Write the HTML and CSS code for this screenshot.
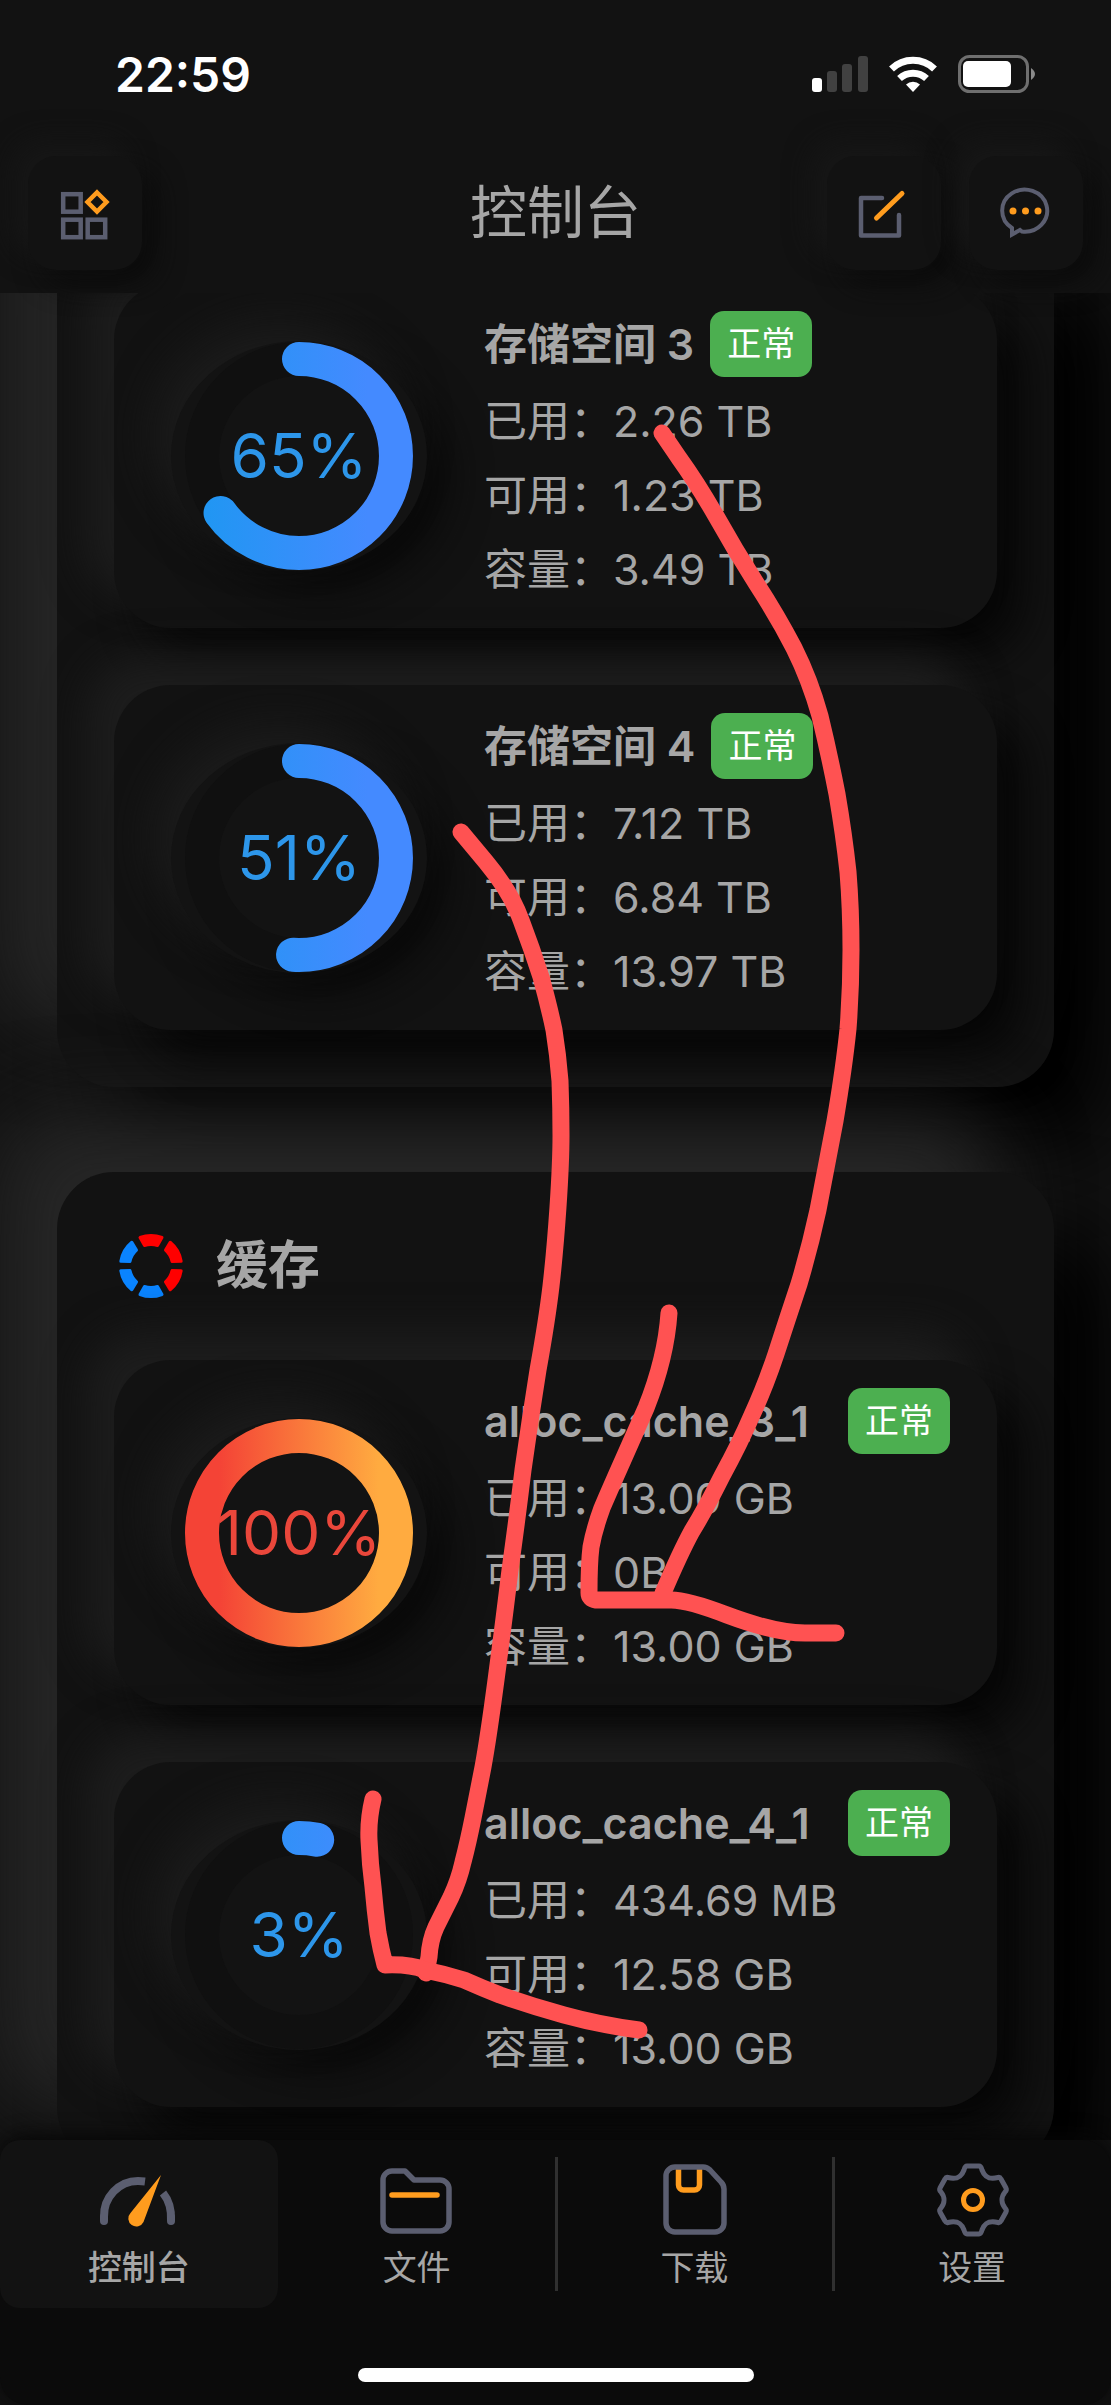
FILE: index.html
```html
<!DOCTYPE html>
<html lang="zh-CN">
<head>
<meta charset="utf-8">
<meta name="viewport" content="width=device-width, initial-scale=1">
<title>控制台</title>
<link rel="stylesheet" href="styles.css">
</head>
<body>
<header class="top">
  <div class="status">
    <span class="clock">22:59</span>
    <div class="status-icons">
      <svg width="56" height="38" viewBox="0 0 56 38" aria-hidden="true">
        <rect x="0" y="23" width="10" height="14" rx="3" fill="#fff"/>
        <g fill="#414141"><rect x="15" y="16" width="10" height="21" rx="3"/><rect x="30" y="9" width="10" height="28" rx="3"/><rect x="46" y="1" width="10" height="36" rx="3"/></g>
      </svg>
      <svg width="48" height="38" viewBox="0 0 48 38" aria-hidden="true">
        <g fill="none" stroke="#fff" stroke-width="7"><path d="M2.500 14 A31 31 0 0 1 45.500 14"/><path d="M10.500 23.500 A20 20 0 0 1 37.500 23.500"/></g>
        <path d="M24 37 L17 29.500 A10.500 10.500 0 0 1 31 29.500 Z" fill="#fff"/>
      </svg>
      <svg width="79" height="38" viewBox="0 0 79 38" aria-hidden="true">
        <rect x="1.500" y="1.500" width="68" height="35" rx="10" fill="none" stroke="#6f6f6f" stroke-width="3"/>
        <rect x="5" y="6" width="48" height="26" rx="5" fill="#fff"/>
        <path d="M73 13 Q81 19 73 25 Z" fill="#8a8a8a"/>
      </svg>
    </div>
  </div>
  <div class="toolbar">
    <div class="tools">
      <button class="tool" type="button" aria-label="应用">
        <svg viewBox="0 0 114 114" fill="none" stroke-width="4.500" stroke="#5b5e70"><rect x="35.200" y="38.200" width="17.500" height="17.500"/><rect x="35.200" y="63.700" width="17.500" height="17.500"/><rect x="59.700" y="63.700" width="17.500" height="17.500"/><path d="M69 36.500 L78.500 46 L69 55.500 L59.500 46 Z" stroke="#ff9c1e"/></svg>
      </button>
    </div>
    <h1 class="title">控制台</h1>
    <div class="tools tools-end">
      <button class="tool" type="button" aria-label="编辑">
        <svg viewBox="0 0 114 114" fill="none" stroke-width="4.500" stroke="#5b5e70" stroke-linecap="round" stroke-linejoin="round"><path d="M55 42 H34 V79.500 H72 V59"/><path d="M75 37.500 L49.500 62" stroke="#ff9c1e" stroke-width="5"/></svg>
      </button>
      <button class="tool" type="button" aria-label="消息">
        <svg viewBox="0 0 114 114" fill="none" stroke-width="4" stroke="#5b5e70"><path d="M43 78.500 V72 A22.500 21 0 1 1 53 75.500 L51 74 Z"/><g fill="#ff9c1e" stroke="none"><circle cx="44" cy="55" r="3.500"/><circle cx="56.500" cy="55" r="3.500"/><circle cx="69" cy="55" r="3.500"/></g></svg>
      </button>
    </div>
  </div>
</header>

<main class="content">
  <svg class="defs" width="0" height="0" aria-hidden="true">
    <defs>
      <linearGradient id="blue" gradientUnits="userSpaceOnUse" x1="1" y1="0" x2="229" y2="0"><stop offset="0.100" stop-color="#2196f3"/><stop offset="0.800" stop-color="#448aff"/></linearGradient>
      <linearGradient id="hot" gradientUnits="userSpaceOnUse" x1="1" y1="0" x2="229" y2="0"><stop offset="0.150" stop-color="#f44336"/><stop offset="0.850" stop-color="#ffab40"/></linearGradient>
    </defs>
  </svg>

  <section class="panel panel-scrolled" aria-label="存储空间">
    <article class="tile">
      <div class="gauge">
        <svg class="ring" viewBox="0 0 230 230" aria-hidden="true"><circle class="track" cx="115" cy="115" r="97"/><path class="bar" stroke="url(#blue)" pathLength="100" stroke-dasharray="65 100" d="M115 18 A97 97 0 0 1 115 212 A97 97 0 0 1 115 18"/></svg>
        <span class="percent">65%</span>
      </div>
      <div class="info">
        <div class="head"><h3 class="name">存储空间 3</h3><span class="badge">正常</span></div>
        <p class="row">已用：2.26 TB</p><p class="row">可用：1.23 TB</p><p class="row">容量：3.49 TB</p>
      </div>
    </article>
    <article class="tile">
      <div class="gauge">
        <svg class="ring" viewBox="0 0 230 230" aria-hidden="true"><circle class="track" cx="115" cy="115" r="97"/><path class="bar" stroke="url(#blue)" pathLength="100" stroke-dasharray="51 100" d="M115 18 A97 97 0 0 1 115 212 A97 97 0 0 1 115 18"/></svg>
        <span class="percent">51%</span>
      </div>
      <div class="info">
        <div class="head"><h3 class="name">存储空间 4</h3><span class="badge">正常</span></div>
        <p class="row">已用：7.12 TB</p><p class="row">可用：6.84 TB</p><p class="row">容量：13.97 TB</p>
      </div>
    </article>
  </section>

  <section class="panel">
    <div class="panel-head">
      <svg class="panel-icon" viewBox="-37 -37 74 74" stroke-width="3" stroke-linejoin="round" aria-hidden="true">
        <g fill="#f00" stroke="#f00"><path d="M-11 -28.500 A31 31 0 0 1 11 -28.500 L6.500 -20.500 A21 21 0 0 0 -6.500 -20.500Z"/><path transform="rotate(60)" d="M-11 -28.500 A31 31 0 0 1 11 -28.500 L6.500 -20.500 A21 21 0 0 0 -6.500 -20.500Z"/><path transform="rotate(120)" d="M-11 -28.500 A31 31 0 0 1 11 -28.500 L6.500 -20.500 A21 21 0 0 0 -6.500 -20.500Z"/></g>
        <g fill="#0a84ff" stroke="#0a84ff"><path transform="rotate(180)" d="M-11 -28.500 A31 31 0 0 1 11 -28.500 L6.500 -20.500 A21 21 0 0 0 -6.500 -20.500Z"/><path transform="rotate(240)" d="M-11 -28.500 A31 31 0 0 1 11 -28.500 L6.500 -20.500 A21 21 0 0 0 -6.500 -20.500Z"/><path transform="rotate(300)" d="M-11 -28.500 A31 31 0 0 1 11 -28.500 L6.500 -20.500 A21 21 0 0 0 -6.500 -20.500Z"/></g>
      </svg>
      <h2 class="panel-title">缓存</h2>
    </div>
    <article class="tile">
      <div class="gauge gauge-full">
        <svg class="ring" viewBox="0 0 230 230" aria-hidden="true"><circle class="track" cx="115" cy="115" r="97"/><circle class="bar" stroke="url(#hot)" cx="115" cy="115" r="97"/></svg>
        <span class="percent">100%</span>
      </div>
      <div class="info">
        <div class="head"><h3 class="name name-cache">alloc_cache_3_1</h3><span class="badge">正常</span></div>
        <p class="row">已用：13.00 GB</p><p class="row">可用：0B</p><p class="row">容量：13.00 GB</p>
      </div>
    </article>
    <article class="tile">
      <div class="gauge">
        <svg class="ring" viewBox="0 0 230 230" aria-hidden="true"><circle class="track" cx="115" cy="115" r="97"/><path class="bar" stroke="url(#blue)" pathLength="100" stroke-dasharray="3 100" d="M115 18 A97 97 0 0 1 115 212 A97 97 0 0 1 115 18"/></svg>
        <span class="percent">3%</span>
      </div>
      <div class="info">
        <div class="head"><h3 class="name name-cache">alloc_cache_4_1</h3><span class="badge">正常</span></div>
        <p class="row">已用：434.69 MB</p><p class="row">可用：12.58 GB</p><p class="row">容量：13.00 GB</p>
      </div>
    </article>
  </section>
</main>

<footer class="bottom">
  <nav class="tabs">
    <a class="tab tab-active" href="#console">
      <svg class="tab-icon" viewBox="0 0 80 80" fill="none" stroke="#5b5e70" stroke-width="8" stroke-linecap="round" aria-hidden="true"><path d="M5 61 V57 A34 35 0 0 1 39 21 Q42 21 46 21.500" stroke-linecap="butt"/><path d="M5 61 V57"/><path d="M64 33 Q73 44 72 61" stroke-linecap="butt"/><path d="M72 61 V57"/><path d="M62 15 L44.500 62 A8 8 0 1 1 31.500 53 Z" fill="#ff9c1e" stroke="none"/></svg>
      <span class="tab-label">控制台</span>
    </a>
    <a class="tab" href="#files">
      <svg class="tab-icon" viewBox="0 0 80 80" fill="none" stroke="#5b5e70" stroke-width="5.500" stroke-linecap="round" stroke-linejoin="round" aria-hidden="true"><path d="M6 62 V20 A9 9 0 0 1 15 11 H28 L37 20 H63 A9 9 0 0 1 72 29 V62 A9 9 0 0 1 63 71 H15 A9 9 0 0 1 6 62 Z"/><path d="M15 35 H60" stroke="#ff9c1e"/></svg>
      <span class="tab-label">文件</span>
    </a>
    <a class="tab tab-divided" href="#downloads">
      <svg class="tab-icon" viewBox="0 0 80 80" fill="none" stroke="#5b5e70" stroke-width="5.500" stroke-linejoin="round" aria-hidden="true"><path d="M24.500 9 V25 A5 5 0 0 0 29.500 30 H40.500 A5 5 0 0 0 45.500 25 V9" stroke="#ff9c1e"/><path d="M12 63 V16 A9 9 0 0 1 21 7 H49 Q53 7 56 10 L67 22 Q70 25 70 29 V63 A9 9 0 0 1 61 72 H21 A9 9 0 0 1 12 63 Z"/></svg>
      <span class="tab-label">下载</span>
    </a>
    <a class="tab tab-divided" href="#settings">
      <svg class="tab-icon" viewBox="0 0 80 80" fill="none" stroke="#5b5e70" stroke-width="5" stroke-linejoin="round" aria-hidden="true"><path d="M35 6 H47 Q49 6 50 10 C53 18 58 19.500 66 17.500 Q68 17 69 19 L74 28 Q75 30 73 32 C69 37 69 43 73 48 Q75 50 74 52 L69 61 Q68 63 66 62.500 C58 60.500 53 62 50 70 Q49 74 47 74 H35 Q33 74 32 70 C29 62 24 60.500 16 62.500 Q14 63 13 61 L8 52 Q7 50 9 48 C13 43 13 37 9 32 Q7 30 8 28 L13 19 Q14 17 16 17.500 C24 19.500 29 18 32 10 Q33 6 35 6 Z"/><circle cx="41" cy="40" r="9.500" stroke="#ff9c1e"/></svg>
      <span class="tab-label">设置</span>
    </a>
  </nav>
  <div class="home-bar"></div>
</footer>

<svg class="marks" viewBox="0 0 1111 2405" aria-hidden="true">
  <path d="M662 433 L679 458 Q697 483 716 516 Q735 550 756 583 Q778 617 794 648 Q810 680 820 716 Q829 753 837 794 Q844 835 848 872 Q851 909 851 950 Q851 990 848 1029 Q844 1068 835 1121 Q825 1174 818 1210 Q810 1247 799 1284 Q787 1320 776 1354 Q765 1387 752 1415 Q740 1443 722 1476 Q705 1510 692 1531 Q680 1553 663 1593"/>
  <path d="M669 1313 Q666 1358 646 1408 Q635 1433 623 1460 Q611 1487 602 1508 Q594 1530 591 1547 Q589 1563 589 1593 Q589 1599 596 1600 H671 Q688 1600 727 1615 Q775 1633 805 1633 H836"/>
  <path d="M461 832 L486 862 Q511 892 521 920 Q532 949 541 977 Q549 1006 554 1030 Q558 1055 560 1081 Q561 1108 561 1135 Q561 1162 558 1207 Q555 1251 551 1286 Q547 1320 538 1370 Q530 1420 523 1470 Q517 1520 510 1570 Q504 1620 496 1680 Q488 1740 483 1767 Q478 1793 473 1818 Q468 1843 463 1862 Q459 1880 451 1897 Q443 1913 436 1927 Q430 1940 429 1957 L426 1973"/>
  <path d="M373 1799 Q368 1820 369 1840 Q370 1864 373 1887 Q375 1910 378 1933 Q381 1950 385 1965 Q410 1964 425 1970 Q445 1974 464 1980 Q482 1988 500 1995 Q531 2006 564 2015 Q600 2025 639 2030"/>
</svg>
</body>
</html>
```
FILE: styles.css
```css
* { box-sizing: border-box; }

body {
  margin: 0;
  height: 100vh;
  display: flex;
  flex-direction: column;
  position: relative;
  overflow: hidden;
  background: #121212;
  color: #a6a6a6;
  font-family: Inter, "Noto Sans CJK SC", sans-serif;
}

h1, h2, h3, p { margin: 0; }

/* Top area */
.top {
  flex: none;
  position: relative;
  background: #121212;
  z-index: 1;
}

.status {
  display: flex;
  justify-content: space-between;
  align-items: center;
  height: 148px;
  padding: 0 74px 0 115px;
}

.clock {
  color: #fff;
  font-size: 48px;
  font-weight: 600;
}

.status-icons { display: flex; gap: 21px; }

.toolbar {
  display: grid;
  grid-template-columns: 1fr auto 1fr;
  align-items: center;
  padding: 8px 28px 23px;
}

.tools { display: flex; gap: 28px; }
.tools-end { justify-content: flex-end; }

.tool {
  width: 114px;
  height: 114px;
  padding: 0;
  border: 0;
  border-radius: 28px;
  background: #121212;
  box-shadow: -14px -14px 28px #171717, 14px 14px 28px #0c0c0c;
}

.tool svg { display: block; }

.title {
  font-size: 57px;
  font-weight: 400;
  line-height: 80px;
}

/* Scrolling content */
.content {
  flex: 1;
  min-height: 0;
  overflow-y: auto;
  scrollbar-width: none;
  padding: 0 57px;
}

.defs { position: absolute; }

.panel {
  display: flex;
  flex-direction: column;
  gap: 57px;
  padding: 57px;
  border-radius: 57px;
  background: #121212;
  box-shadow: -57px -57px 85px #272727, 57px 57px 85px #000;
}

.panel + .panel { margin-top: 85px; }

.panel-scrolled {
  margin-top: -67px;
}

.panel-head {
  display: flex;
  align-items: center;
  gap: 28px;
}

.panel-icon { width: 74px; height: 74px; }

.panel-title {
  font-size: 52px;
  font-weight: 700;
  line-height: 74px;
}

.tile {
  display: flex;
  align-items: center;
  gap: 57px;
  min-height: 345px;
  padding: 20px 42px 20px 57px;
  border-radius: 57px;
  background: #121212;
  box-shadow: -28px -28px 42px #1d1d1d, 28px 28px 42px #070707;
}

.gauge {
  flex: none;
  display: grid;
  place-items: center;
  width: 256px;
  height: 230px;
  border-radius: 50%;
  background: #131313;
  box-shadow: -20px -20px 42px #1b1b1b, 20px 20px 42px #090909;
  color: #2d96ea;
}

.gauge > * { grid-area: 1 / 1; }
.gauge-full { color: #ea473b; }

.ring { width: 230px; height: 230px; }
.ring * { fill: none; stroke-width: 34px; }
.track { stroke: #101010; }
.bar { stroke-linecap: round; }

.percent { font-size: 62px; }

.info { padding-top: 6px; }

.head {
  display: flex;
  align-items: center;
  gap: 16px;
  margin-bottom: 7px;
}

.name {
  font-size: 43px;
  font-weight: 600;
  line-height: 66px;
  white-space: nowrap;
}

.name-cache { min-width: 348px; }

.badge {
  padding: 0 17px;
  border-radius: 14px;
  background: #4caf50;
  color: #fff;
  font-size: 34px;
  line-height: 66px;
  white-space: nowrap;
}

.row {
  font-size: 43px;
  line-height: 74px;
}

/* Tab bar */
.bottom {
  flex: none;
  position: relative;
  border-radius: 28px;
  background: #0b0b0b;
  box-shadow: 0 -4px 20px #060606;
}

.tabs {
  display: grid;
  grid-template-columns: repeat(4, 1fr);
}

.tab {
  position: relative;
  display: flex;
  flex-direction: column;
  align-items: center;
  padding: 20px 0 12px;
  color: #a6a6a6;
  text-decoration: none;
}

.tab-active {
  border-radius: 20px;
  background: #121212;
  font-weight: 500;
}

.tab-divided::before {
  content: "";
  position: absolute;
  left: -1px;
  top: 17px;
  bottom: 17px;
  width: 3px;
  background: #303030;
}

.tab-icon { width: 80px; height: 80px; }

.tab-label {
  font-size: 34px;
  line-height: 56px;
}

.home-bar {
  width: 396px;
  height: 14px;
  margin: 60px auto 23px;
  border-radius: 7px;
  background: #fff;
}

/* Hand-drawn arrows over the whole screen */
.marks {
  position: absolute;
  top: 0;
  left: 0;
  width: 100%;
  pointer-events: none;
  z-index: 2;
}

.marks path {
  fill: none;
  stroke: #ff5252;
  stroke-width: 17px;
  stroke-linecap: round;
  stroke-linejoin: round;
}
```
